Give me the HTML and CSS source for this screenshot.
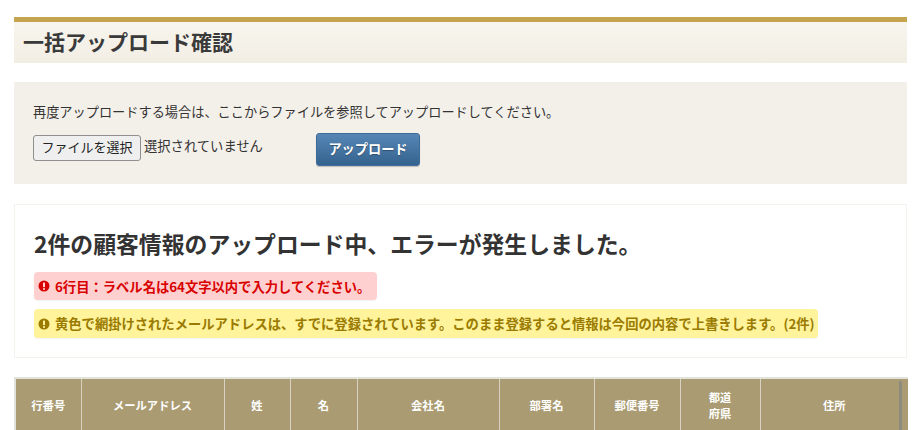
FILE: index.html
```html
<!DOCTYPE html>
<html lang="ja">
<head>
<meta charset="utf-8">
<title>一括アップロード確認</title>
<link rel="stylesheet" href="styles.css">
</head>
<body>
<main class="page">
  <h1 class="title">一括アップロード確認</h1>
  <section class="upload">
    <p class="upload-note">再度アップロードする場合は、ここからファイルを参照してアップロードしてください。</p>
    <div class="upload-row">
      <button class="file-btn" type="button">ファイルを選択</button>
      <span class="file-name">選択されていません</span>
      <button class="submit-btn" type="button">アップロード</button>
    </div>
  </section>
  <section class="result">
    <h2 class="result-title">2件の顧客情報のアップロード中、エラーが発生しました。</h2>
    <p class="alert alert-error"><svg class="alert-icon" viewBox="0 0 12 12"><circle cx="6" cy="6" r="5.5" fill="currentColor"/><rect x="5" y="2.4" width="2" height="4.8" rx=".6" fill="#ffd0d0"/><circle cx="6" cy="9" r="1.1" fill="#ffd0d0"/></svg>6行目：ラベル名は64文字以内で入力してください。</p>
    <p class="alert alert-warn"><svg class="alert-icon" viewBox="0 0 12 12"><circle cx="6" cy="6" r="5.5" fill="currentColor"/><rect x="5" y="2.4" width="2" height="4.8" rx=".6" fill="#fff39b"/><circle cx="6" cy="9" r="1.1" fill="#fff39b"/></svg>黄色で網掛けされたメールアドレスは、すでに登録されています。このまま登録すると情報は今回の内容で上書きします。(2件)</p>
  </section>
  <div class="table-wrap">
    <table class="list">
      <colgroup>
        <col class="c1"><col class="c2"><col class="c3"><col class="c4"><col class="c5"><col class="c6"><col class="c7"><col class="c8"><col class="c9">
      </colgroup>
      <thead>
        <tr>
          <th>行番号</th><th>メールアドレス</th><th>姓</th><th>名</th><th>会社名</th><th>部署名</th><th>郵便番号</th><th>都道<br>府県</th><th>住所</th>
        </tr>
      </thead>
    </table>
    <div class="scrollbar"></div>
  </div>
</main>
</body>
</html>
```
FILE: styles.css
```css
html, body {
  margin: 0;
  padding: 0;
  background: #fff;
  height: 430px;
  overflow: hidden;
}
body {
  font-family: "Noto Sans CJK JP", "Liberation Sans", sans-serif;
  color: #333;
}
.page {
  padding: 17px 15px 0 14px;
}
.title {
  margin: 0 0 19px;
  height: 41px;
  border-top: 5px solid #c4a44f;
  background: linear-gradient(#f8f5ee, #f2eee4);
  padding-left: 9px;
  font-size: 21px;
  line-height: 38px;
  font-weight: 700;
  color: #3a3a3a;
}
.upload {
  height: 102px;
  box-sizing: border-box;
  background: #f3f0ea;
  padding: 20px 19px 0;
  margin-bottom: 20px;
}
.upload-note {
  margin: 0 0 11px;
  font-size: 13.2px;
  line-height: 20px;
  color: #333;
}
.upload-row {
  display: flex;
  align-items: flex-start;
}
.file-btn {
  width: 108px;
  height: 26px;
  margin: 2px 3px 0 0;
  padding: 0 0 3px;
  border: 1px solid #8f8f8f;
  border-radius: 3px;
  background: #efefef;
  font: 13px/1 "Noto Sans CJK JP", sans-serif;
  color: #222;
}
.file-name {
  width: 172px;
  font-size: 13.3px;
  line-height: 26px;
  color: #333;
}
.submit-btn {
  width: 104px;
  height: 33px;
  padding: 0 0 1px;
  border: 1px solid #3f6c99;
  border-radius: 3px;
  background: linear-gradient(#5686b5, #35638f);
  box-shadow: 0 1px 1px rgba(0, 0, 0, .2);
  font: 700 13.2px/1 "Noto Sans CJK JP", sans-serif;
  color: #fff;
  text-shadow: 0 1px 1px rgba(0, 0, 0, .3);
}
.result {
  height: 154px;
  box-sizing: border-box;
  border: 1px solid #f4f2ec;
  padding: 20px 19px 0;
  margin-bottom: 19px;
}
.result-title {
  margin: 0 0 11px;
  font-size: 22.85px;
  line-height: 36px;
  font-weight: 700;
  color: #333;
}
.alert {
  display: flex;
  align-items: center;
  width: fit-content;
  box-sizing: border-box;
  margin: 0 0 9px;
  height: 28px;
  padding: 0 3px 0 4px;
  border-radius: 4px;
  font-size: 13.3px;
  font-weight: 700;
  box-shadow: 0 1px 1px rgba(0, 0, 0, .05);
}
.alert-error {
  background: #ffd0d0;
  color: #d80000;
  padding-right: 7px;
}
.alert-warn {
  background: #fff39b;
  color: #9a7b00;
  height: 29px;
}
.alert-icon {
  width: 12px;
  height: 12px;
  margin-right: 5px;
  flex: none;
}
.table-wrap {
  position: relative;
  height: 60px;
}
.list {
  width: 893px;
  table-layout: fixed;
  border-collapse: collapse;
  border-top: 2px solid #e2e2dc;
}
.c1 { width: 66px; }
.c2 { width: 143px; }
.c3 { width: 66px; }
.c4 { width: 67px; }
.c5 { width: 142px; }
.c6 { width: 95px; }
.c7 { width: 86px; }
.c8 { width: 80px; }
.c9 { width: 148px; }
.list th {
  height: 51px;
  padding: 0;
  background: #aa9b72;
  border-left: 1px solid #d6d1c0;
  border-bottom: 1px solid #d6d1c0;
  color: #fff;
  font-size: 11.3px;
  line-height: 16px;
  font-weight: 700;
  text-align: center;
}
.list th:first-child {
  border-left: 2px solid #e2e2dc;
}
.scrollbar {
  position: absolute;
  left: 885px;
  top: 4px;
  width: 3px;
  height: 50px;
  background: #8d8a7e;
}
```
